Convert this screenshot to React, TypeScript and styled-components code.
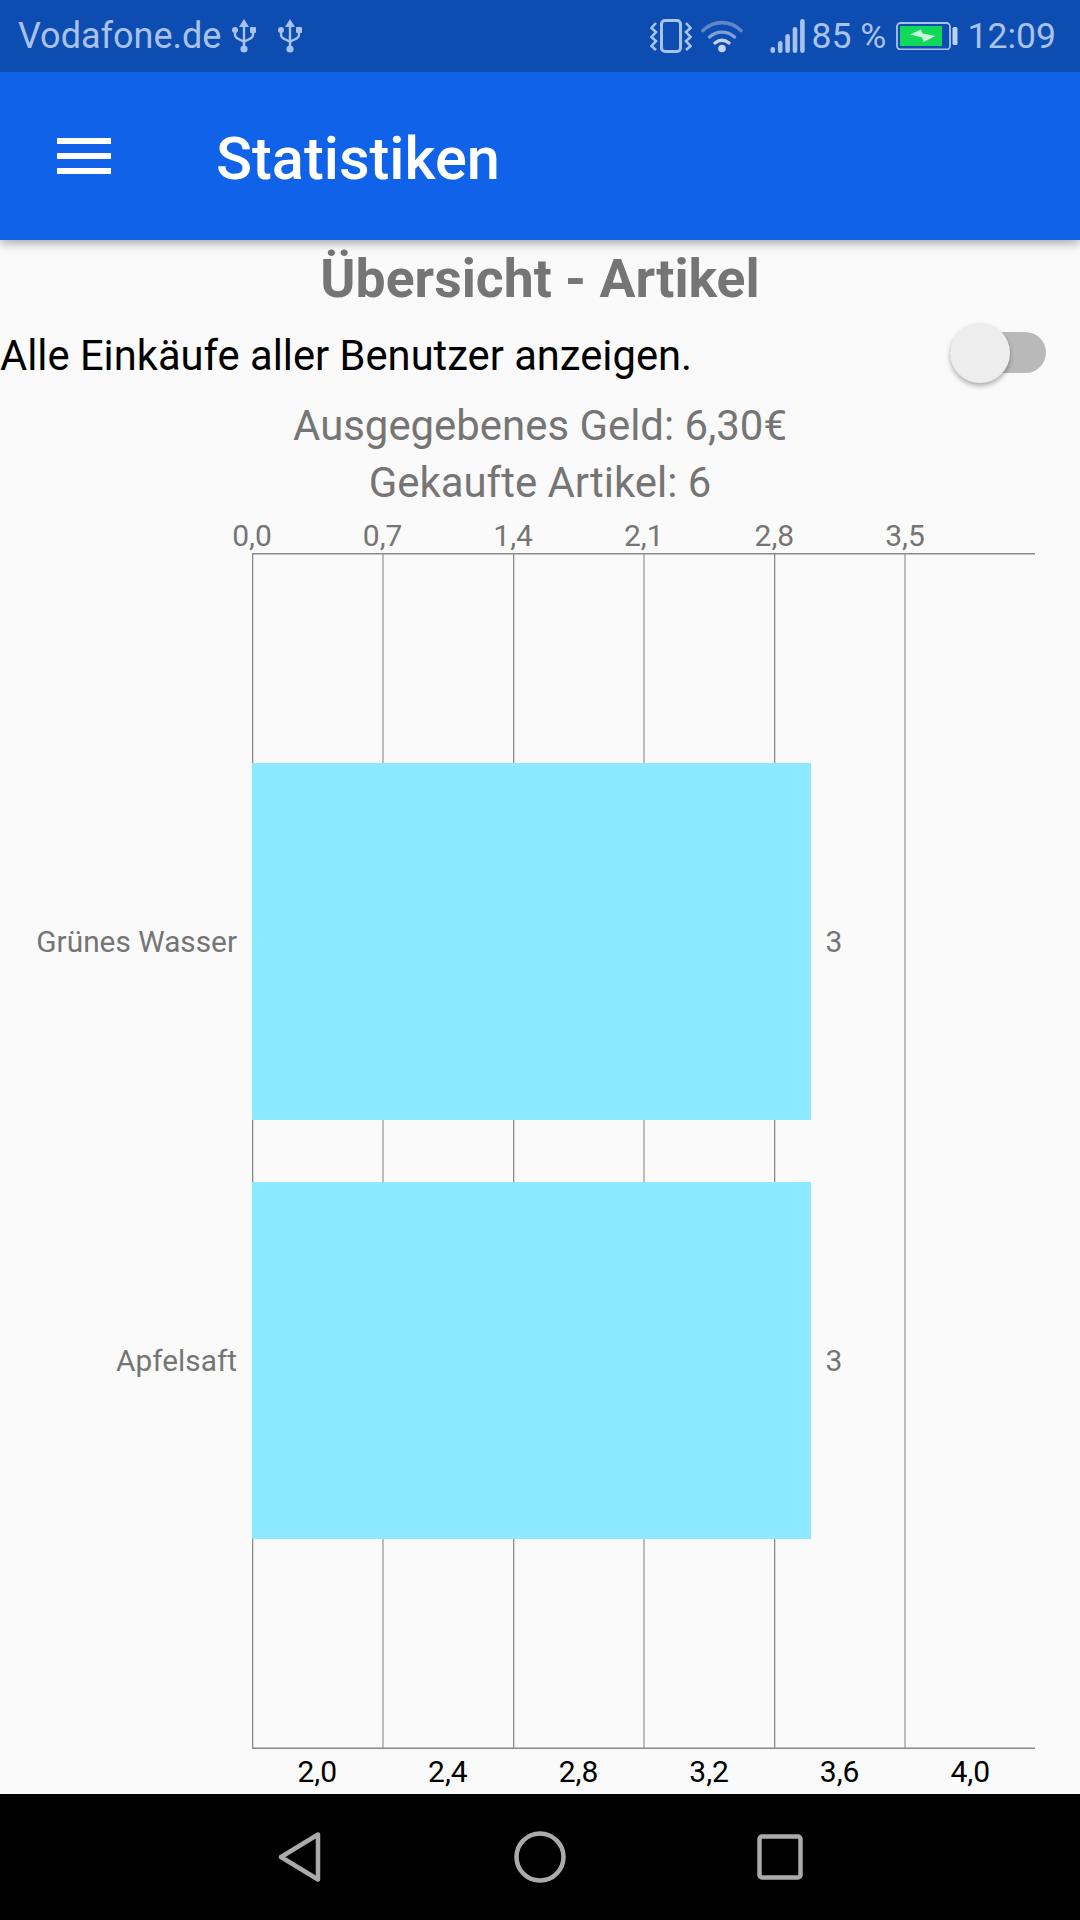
import styled, { createGlobalStyle } from "styled-components";

const GlobalStyle = createGlobalStyle`
  html, body {
    margin: 0;
    padding: 0;
    background: #fafafa;
    font-family: Roboto, "Noto Sans", sans-serif;
  }
`;

const STEP = 130.6;
const topTicks = ["0,0", "0,7", "1,4", "2,1", "2,8", "3,5"];
const bottomTicks = ["2,0", "2,4", "2,8", "3,2", "3,6", "4,0"];
const items = ["Grünes Wasser", "Apfelsaft"];

const Page = styled.div`
  width: 1080px;
  height: 1920px;
  display: flex;
  flex-direction: column;
  overflow: hidden;
  background: #fafafa;
`;

const StatusBar = styled.div`
  height: 72px;
  flex: none;
  display: flex;
  align-items: center;
  padding-left: 18px;
  background: #0d4cb0;
  color: #a9c2ea;
  font-size: 36px;
  position: relative;
  z-index: 3;

  svg {
    display: block;
    flex: none;
  }
`;

const Carrier = styled.span`
  margin-right: 11px;
`;

const StatusRight = styled.div`
  margin-left: auto;
  display: flex;
  align-items: center;
  padding-right: 24px;
  font-size: 35.6px;
`;

const AppBar = styled.header`
  height: 168px;
  flex: none;
  display: flex;
  align-items: center;
  padding-left: 57px;
  background: #1062e9;
  box-shadow: 0 3px 10px rgba(0, 0, 0, 0.35);
  position: relative;
  z-index: 2;
`;

const Menu = styled.div`
  width: 54px;
  height: 36px;
  display: flex;
  flex-direction: column;
  justify-content: space-between;
  margin-right: 105px;

  span {
    height: 6px;
    background: #fff;
  }
`;

const Title = styled.h1`
  margin: 0;
  padding-top: 5px;
  color: #fff;
  font-size: 59.5px;
  font-weight: 500;
`;

const Content = styled.main`
  flex: 1;
  min-height: 0;
  display: flex;
  flex-direction: column;
`;

const Heading = styled.h2`
  margin: 0;
  height: 78px;
  line-height: 78px;
  text-align: center;
  color: #757575;
  font-size: 53.5px;
  font-weight: 700;
`;

const ToggleRow = styled.div`
  height: 74px;
  margin-bottom: 5px;
  display: flex;
  align-items: center;
  justify-content: space-between;
  padding-right: 34px;
  font-size: 41.7px;
  color: #000;
`;

const Toggle = styled.div`
  width: 96px;
  height: 41px;
  margin-bottom: 5px;
  position: relative;
  border-radius: 21px;
  background: #b9b9b9;
`;

const Knob = styled.div`
  position: absolute;
  left: 0;
  top: -9px;
  width: 60px;
  height: 60px;
  border-radius: 50%;
  background: #ededed;
  box-shadow: 0 3px 5px rgba(0, 0, 0, 0.3);
`;

const Stat = styled.div`
  height: 57px;
  line-height: 57px;
  text-align: center;
  font-size: 41.9px;
  color: #757575;
`;

const TickRow = styled.div<{ $offset: number; $top: number; $height: number }>`
  display: flex;
  box-sizing: border-box;
  height: ${(p) => p.$height}px;
  padding-top: ${(p) => p.$top}px;
  align-items: center;
  padding-left: ${(p) => p.$offset}px;
  font-size: 30px;
`;

const Tick = styled.span<{ $dark?: boolean }>`
  width: ${STEP}px;
  flex: none;
  text-align: center;
  color: ${(p) => (p.$dark ? "#000" : "#757575")};
`;

const ChartBody = styled.div`
  display: flex;
  height: 1196px;
`;

const Categories = styled.div`
  width: 252px;
  flex: none;
  box-sizing: border-box;
  padding: 210px 15px 0 0;
  display: flex;
  flex-direction: column;
  gap: 62px;
`;

const Category = styled.div`
  height: 357px;
  display: flex;
  align-items: center;
  justify-content: flex-end;
  font-size: 29.8px;
  color: #757575;
`;

const NavBar = styled.nav`
  height: 126px;
  flex: none;
  background: #000;
  display: flex;
  align-items: center;

  svg {
    display: block;
  }
`;

const NavButton = styled.div<{ $left: number }>`
  margin-left: ${(p) => p.$left}px;
  display: flex;
`;

function UsbIcon({ gap }: { gap: number }) {
  return (
    <svg width="24" height="35" viewBox="0 0 24 35" style={{ marginRight: gap }}>
      <path d="M12 0l5 8H7z" fill="#a9c2ea" />
      <path d="M12 6v23" stroke="#a9c2ea" strokeWidth="2.4" />
      <circle cx="12" cy="30" r="3.6" fill="#a9c2ea" />
      <path d="M3 12v3.5c0 3 2 4 4.5 5l4.5 2.2 4.5-2.2c2.5-1 4.5-2 4.5-5V12" fill="none" stroke="#a9c2ea" strokeWidth="2.4" />
      <circle cx="3" cy="11" r="3" fill="#a9c2ea" />
      <rect x="18" y="8" width="6" height="6" rx="1" fill="#a9c2ea" />
    </svg>
  );
}

function VibrateIcon() {
  return (
    <svg width="42" height="35" viewBox="0 0 42 35">
      <rect x="11.5" y="1.5" width="19" height="31" rx="3.5" fill="none" stroke="#a9c2ea" strokeWidth="3" />
      <path d="M6 4L1.5 9 6 13 1.5 18 6 22 1.5 27 6 31M36 4l4.5 5L36 13l4.5 5L36 22l4.5 5L36 31" fill="none" stroke="#a9c2ea" strokeWidth="2.6" />
    </svg>
  );
}

function WifiIcon() {
  return (
    <svg width="42" height="34" viewBox="0 0 42 34" style={{ marginLeft: 9 }}>
      <path d="M2 11.5C13 1 29 1 40 11.5" fill="none" stroke="#5f86c9" strokeWidth="3.6" strokeLinecap="round" />
      <path d="M8.5 18C16 11.5 26 11.5 33.5 18" fill="none" stroke="#7fa0d8" strokeWidth="3.4" strokeLinecap="round" />
      <path d="M14 24c4.5-3.5 9.5-3.5 14 0" fill="none" stroke="#c3d5f1" strokeWidth="3.4" strokeLinecap="round" />
      <circle cx="21" cy="29.5" r="3.8" fill="#c3d5f1" />
    </svg>
  );
}

function SignalIcon() {
  const bars = [28, 22, 15, 8, 0];
  return (
    <svg width="35" height="34" viewBox="0 0 35 34" style={{ marginLeft: 27, marginRight: 7 }}>
      {bars.map((y, i) => (
        <rect key={i} x={i * 7.4 + 0.5} y={y} width="4.6" height={34 - y} rx="2.3" fill="#a9c2ea" />
      ))}
    </svg>
  );
}

function BatteryIcon() {
  return (
    <svg width="62" height="28" viewBox="0 0 62 28" style={{ marginLeft: 10, marginRight: 9 }}>
      <rect x="1" y="1" width="53" height="26.5" rx="3.5" fill="none" stroke="#a9c2ea" strokeWidth="1.8" />
      <rect x="4" y="4" width="42" height="20" fill="#0fd85a" />
      <rect x="56.5" y="5" width="5" height="18" rx="1.5" fill="#bcd0ef" />
      <path d="M14 12.5l11-5 1.5 4 13 2.5-12 6-1.5-4.5z" fill="#c9f6d9" />
    </svg>
  );
}

function PlotSvg() {
  const lines = [0, 1, 2, 3, 4, 5];
  return (
    <svg width="783" height="1196" viewBox="0 0 783 1196" style={{ display: "block" }}>
      {lines.map((i) => {
        const x = Math.round(i * STEP);
        return i % 2 === 0 ? (
          <rect key={i} x={x} y="0" width="1.3" height="1196" fill="#8a8a8a" />
        ) : (
          <rect key={i} x={x - 1} y="0" width="2" height="1196" fill="#bdbdbd" />
        );
      })}
      <rect x="0" y="0" width="783" height="1.5" fill="#8a8a8a" />
      <rect x="0" y="1194.5" width="783" height="1.5" fill="#8a8a8a" />
      <rect x="0" y="210" width="559" height="357" fill="#8de9ff" />
      <rect x="0" y="629" width="559" height="357" fill="#8de9ff" />
      <text x="582" y="399" textAnchor="middle" fontSize="30" fill="#757575" fontFamily="Roboto, sans-serif">3</text>
      <text x="582" y="818" textAnchor="middle" fontSize="30" fill="#757575" fontFamily="Roboto, sans-serif">3</text>
    </svg>
  );
}

export default function App() {
  return (
    <Page>
      <GlobalStyle />
      <StatusBar>
        <Carrier>Vodafone.de</Carrier>
        <UsbIcon gap={22} />
        <UsbIcon gap={0} />
        <StatusRight>
          <VibrateIcon />
          <WifiIcon />
          <SignalIcon />
          <span>85 %</span>
          <BatteryIcon />
          <span>12:09</span>
        </StatusRight>
      </StatusBar>
      <AppBar>
        <Menu>
          <span />
          <span />
          <span />
        </Menu>
        <Title>Statistiken</Title>
      </AppBar>
      <Content>
        <Heading>Übersicht - Artikel</Heading>
        <ToggleRow>
          <span>Alle Einkäufe aller Benutzer anzeigen.</span>
          <Toggle>
            <Knob />
          </Toggle>
        </ToggleRow>
        <Stat>Ausgegebenes Geld: 6,30€</Stat>
        <Stat>Gekaufte Artikel: 6</Stat>
        <TickRow $offset={252 - STEP / 2} $top={6} $height={42}>
          {topTicks.map((t) => (
            <Tick key={t}>{t}</Tick>
          ))}
        </TickRow>
        <ChartBody>
          <Categories>
            {items.map((name) => (
              <Category key={name}>{name}</Category>
            ))}
          </Categories>
          <PlotSvg />
        </ChartBody>
        <TickRow $offset={252} $top={0} $height={45}>
          {bottomTicks.map((t) => (
            <Tick key={t} $dark>{t}</Tick>
          ))}
        </TickRow>
      </Content>
      <NavBar>
        <NavButton $left={278}>
          <svg width="44" height="52" viewBox="0 0 44 52">
            <path d="M40 3.5v45L3 26z" fill="none" stroke="#aaa" strokeWidth="4.5" strokeLinejoin="round" />
          </svg>
        </NavButton>
        <NavButton $left={192}>
          <svg width="52" height="52" viewBox="0 0 52 52">
            <circle cx="26" cy="26" r="23.5" fill="none" stroke="#aaa" strokeWidth="4.5" />
          </svg>
        </NavButton>
        <NavButton $left={191}>
          <svg width="46" height="46" viewBox="0 0 46 46">
            <rect x="2.5" y="2.5" width="41" height="41" rx="2.5" fill="none" stroke="#aaa" strokeWidth="4.5" />
          </svg>
        </NavButton>
      </NavBar>
    </Page>
  );
}
